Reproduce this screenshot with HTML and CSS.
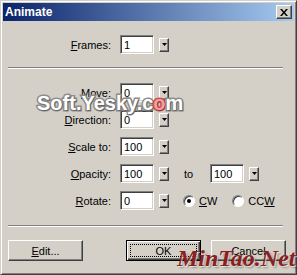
FILE: index.html
```html
<!DOCTYPE html>
<html lang="en">
<head>
    <meta charset="UTF-8">
    <title>Animate</title>
    <link rel="stylesheet" href="styles.css">
</head>
<body>

    <div class="window">
        <div class="titlebar">
            <span class="title">Animate</span>
            <span class="close">
                <svg width="8" height="7" viewBox="0 0 8 7"><path d="M0 0h2l2 2.5L6 0h2L5 3.5 8 7H6L4 4.5 2 7H0l3-3.5z" fill="#000"/></svg>
            </span>
        </div>

        <div class="body">
            <!-- frames -->
            <div class="row">
                <label class="label"><u>F</u>rames:</label>
                <span class="box">1</span>
                <span class="drop"><svg width="5" height="5" viewBox="0 0 5 5"><path d="M0 1h5L2.5 4z" fill="#000"/></svg></span>
            </div>

            <div class="sep"></div>

            <div class="fields">
                <div class="row">
                    <label class="label"><u>M</u>ove:</label>
                    <span class="box">0</span>
                    <span class="drop"><svg width="5" height="5" viewBox="0 0 5 5"><path d="M0 1h5L2.5 4z" fill="#000"/></svg></span>
                </div>
                <div class="row">
                    <label class="label"><u>D</u>irection:</label>
                    <span class="box">0</span>
                    <span class="drop"><svg width="5" height="5" viewBox="0 0 5 5"><path d="M0 1h5L2.5 4z" fill="#000"/></svg></span>
                </div>
                <div class="row">
                    <label class="label"><u>S</u>cale to:</label>
                    <span class="box">100</span>
                    <span class="drop"><svg width="5" height="5" viewBox="0 0 5 5"><path d="M0 1h5L2.5 4z" fill="#000"/></svg></span>
                </div>
                <div class="row">
                    <label class="label"><u>O</u>pacity:</label>
                    <span class="box">100</span>
                    <span class="drop"><svg width="5" height="5" viewBox="0 0 5 5"><path d="M0 1h5L2.5 4z" fill="#000"/></svg></span>
                    <span class="to">to</span>
                    <span class="box">100</span>
                    <span class="drop"><svg width="5" height="5" viewBox="0 0 5 5"><path d="M0 1h5L2.5 4z" fill="#000"/></svg></span>
                </div>
                <div class="row">
                    <label class="label"><u>R</u>otate:</label>
                    <span class="box">0</span>
                    <span class="drop"><svg width="5" height="5" viewBox="0 0 5 5"><path d="M0 1h5L2.5 4z" fill="#000"/></svg></span>
                    <span class="radio checked"></span>
                    <span class="radio-label"><u>C</u>W</span>
                    <span class="radio"></span>
                    <span class="radio-label">CC<u>W</u></span>
                </div>
            </div>

            <div class="sep sep-bottom"></div>

            <div class="buttons">
                <span class="btn"><u>E</u>dit...</span>
                <span class="btn btn-default"><span class="focus">OK</span></span>
                <span class="btn btn-cancel">Cancel</span>
            </div>
        </div>

        <!-- watermarks -->
        <div class="wm-yesky">Soft.Yesky.c<span class="wm-dot">o</span>m</div>
        <div class="wm-mintao">MinTao.Net</div>
    </div>

</body>
</html>
```

FILE: styles.css
```css
* {
    margin: 0;
    padding: 0;
    box-sizing: border-box;
}

body {
    font-family: 'Liberation Sans', Arial, sans-serif;
    font-size: 11px;
    color: #000;
    background: #d4d0c8;
}

.window {
    position: relative;
    width: 297px;
    height: 275px;
    background: #d4d0c8;
    border: 1px solid;
    border-color: #d4d0c8 #404040 #404040 #d4d0c8;
    box-shadow: inset 1px 1px #fff, inset -1px -1px #808080;
    padding: 2px;
    display: flex;
    flex-direction: column;
}

.titlebar {
    height: 18px;
    background: linear-gradient(to right, #0a246a, #a6caf0);
    display: flex;
    align-items: center;
    justify-content: space-between;
    padding: 0 2px 0 2px;
}

.title {
    color: #fff;
    font-weight: bold;
    font-size: 12px;
}

.close {
    width: 16px;
    height: 14px;
    background: #d4d0c8;
    border: 1px solid;
    border-color: #fff #404040 #404040 #fff;
    box-shadow: inset -1px -1px #808080;
    display: flex;
    align-items: center;
    justify-content: center;
}

.body {
    flex: 1;
    padding-top: 14px;
    display: flex;
    flex-direction: column;
}

.row {
    display: flex;
    align-items: center;
    height: 19px;
}

.label {
    width: 108px;
    margin-right: 9px;
    text-align: right;
}

.box {
    width: 34px;
    height: 19px;
    background: #fff;
    border: 1px solid;
    border-color: #808080 #fff #fff #808080;
    box-shadow: inset 1px 1px #404040, inset -1px -1px #d4d0c8;
    padding: 3px 0 0 3px;
    line-height: 12px;
}

.drop {
    width: 10px;
    height: 14px;
    margin-left: 5px;
    border: 1px solid;
    border-color: #fff #404040 #404040 #fff;
    box-shadow: inset -1px -1px #808080;
    display: flex;
    align-items: center;
    justify-content: center;
}

.to {
    margin-left: 15px;
    width: 26px;
}

.radio {
    position: relative;
    width: 12px;
    height: 12px;
    margin-left: 14px;
    border-radius: 50%;
    background: #fff;
    border: 1px solid;
    border-color: #808080 #fff #fff #808080;
    box-shadow: inset 1px 1px #404040;
}

.radio + .radio-label + .radio {
    margin-left: 15px;
}

.radio.checked::after {
    content: "";
    position: absolute;
    left: 3px;
    top: 3px;
    width: 4px;
    height: 4px;
    border-radius: 50%;
    background: #000;
}

.radio-label {
    margin-left: 4px;
}

.sep {
    margin: 13px 0 0 5px;
    width: 275px;
    height: 2px;
    border-top: 1px solid #808080;
    border-bottom: 1px solid #fff;
}

.fields {
    margin-top: 14px;
    display: flex;
    flex-direction: column;
    gap: 8px;
}

.sep-bottom {
    margin-top: 15px;
}

.buttons {
    margin-top: 13px;
    padding-left: 5px;
    display: flex;
}

.btn {
    width: 75px;
    height: 21px;
    border: 1px solid;
    border-color: #fff #404040 #404040 #fff;
    box-shadow: inset -1px -1px #808080;
    display: flex;
    align-items: center;
    justify-content: center;
}

.btn-default {
    margin-left: 43px;
    border: 1px solid #000;
    box-shadow: inset 1px 1px #fff, inset -1px -1px #404040, inset -2px -2px #808080;
    padding: 3px;
}

.focus {
    width: 100%;
    height: 100%;
    border: 1px dotted #000;
    display: flex;
    align-items: center;
    justify-content: center;
}

.btn-cancel {
    margin-left: 10px;
}

/* watermarks */
.wm-yesky {
    position: absolute;
    left: 36px;
    top: 91px;
    font-size: 20px;
    font-weight: bold;
    color: #fff;
    -webkit-text-stroke: 3px #8c8c8c;
    paint-order: stroke fill;
    text-shadow: 1px 1px 1px rgba(0, 0, 0, 0.3);
}

.wm-dot {
    color: #f0a0a0;
    -webkit-text-stroke-color: #d04848;
}

.wm-mintao {
    position: absolute;
    left: 176px;
    top: 244px;
    font-family: 'Liberation Serif', 'Times New Roman', serif;
    font-size: 24px;
    font-weight: bold;
    font-style: italic;
    color: #8c1f1f;
    text-shadow: 1px 1px 0 rgba(255, 255, 255, 0.6), 2px 2px 2px rgba(0, 0, 0, 0.3);
}
```
